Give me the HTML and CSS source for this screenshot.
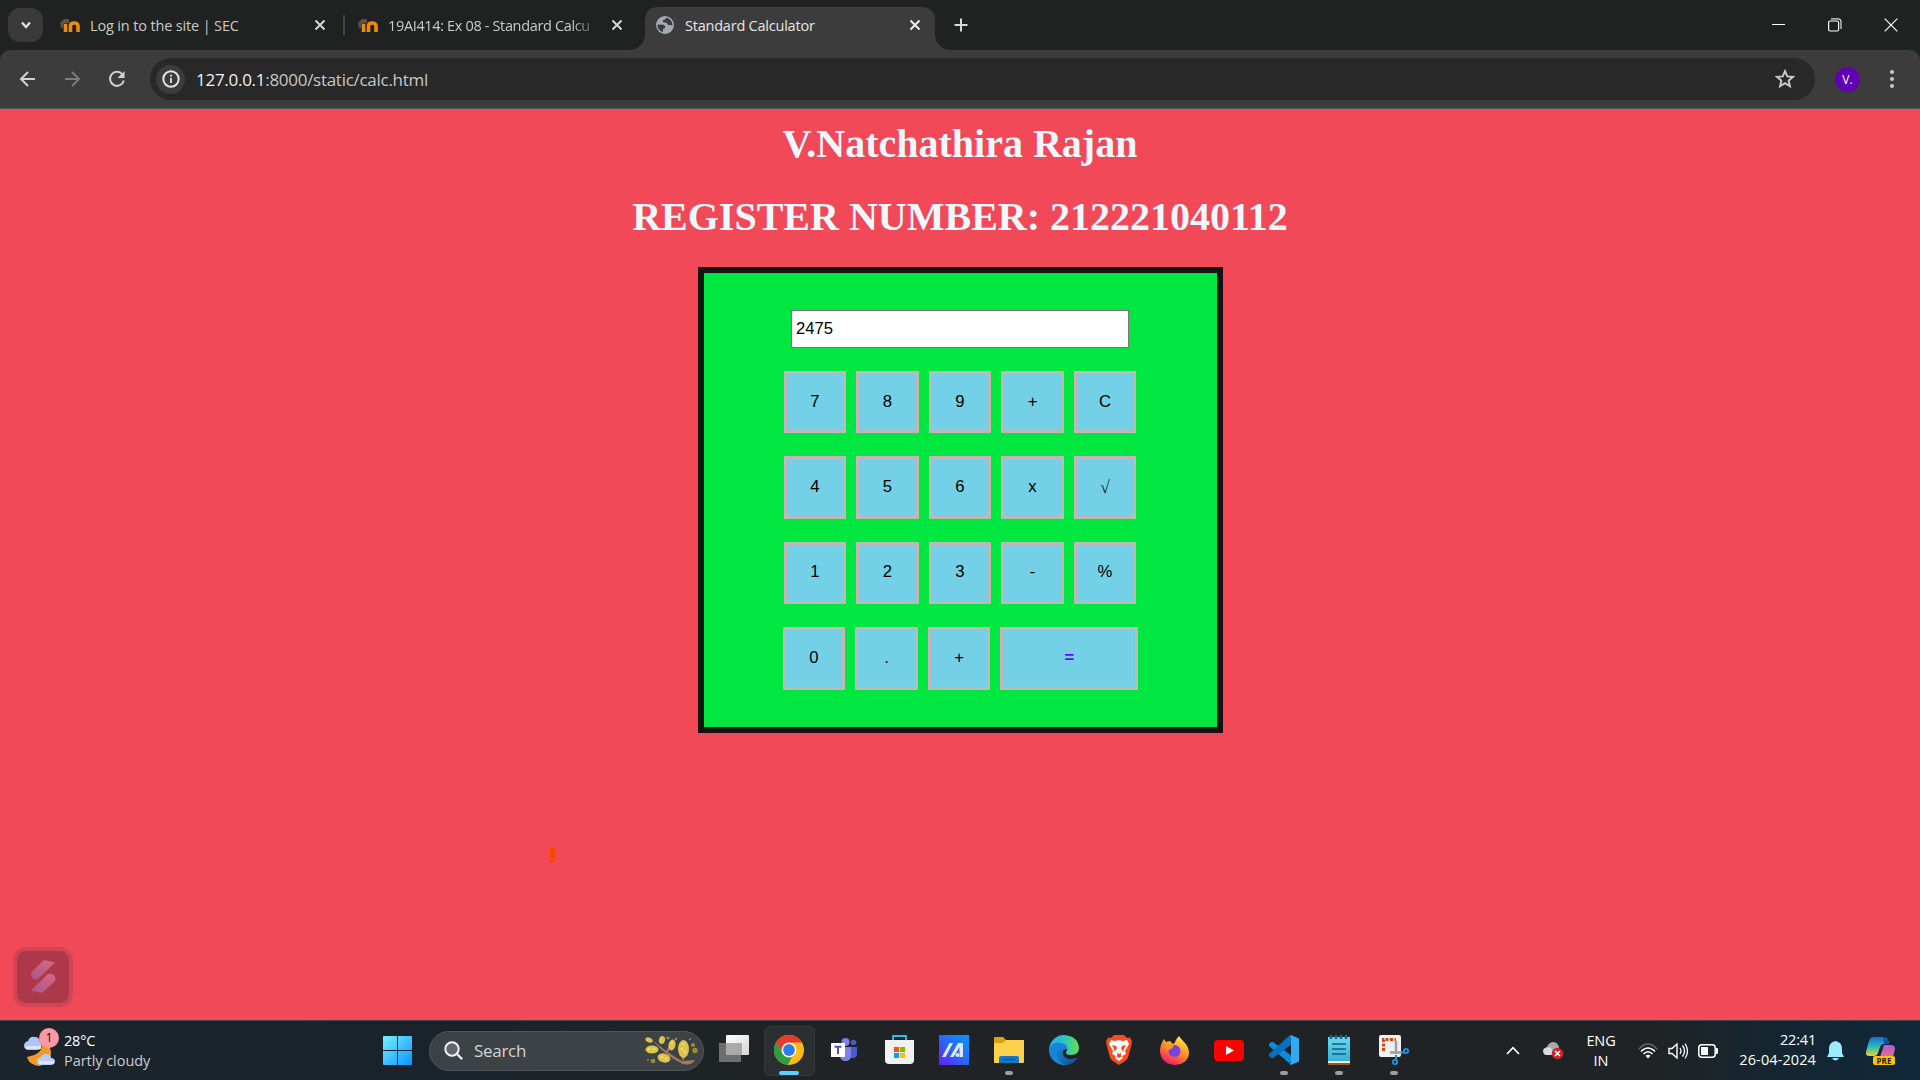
FILE: index.html
```html
<!DOCTYPE html>
<html lang="en">
<head>
<meta charset="utf-8">
<title>Standard Calculator</title>
<link rel="stylesheet" href="styles.css">
</head>
<body>
<div class="screen">
  <header class="tabs">
    <button class="tab-search"><svg width="14" height="14" viewBox="0 0 14 14"><path d="M3 4.5l4 4.500 4-4.500" fill="none" stroke="#e3e3e3" stroke-width="2.200"/></svg></button>
    <div class="tab first">
      <svg class="moodle" width="20" height="15" viewBox="0 0 20 15"><path d="M0 5L4 1h5v4L3 6v4H1z" fill="#59534b"/><path d="M5.500 6v8M10.500 14V8Q10.500 5 14.200 5T18 8v6" fill="none" stroke="#ef8a10" stroke-width="3.600"/></svg>
      <span class="tab-title t1">Log in to the site | SEC</span>
      <svg class="x" width="12" height="12" viewBox="0 0 12 12"><path d="M1.500 1.500l9 9m0-9l-9 9" stroke="#d5d5d5" stroke-width="2"/></svg>
    </div>
    <div class="tab second">
      <svg class="moodle" width="20" height="15" viewBox="0 0 20 15"><path d="M0 5L4 1h5v4L3 6v4H1z" fill="#59534b"/><path d="M5.500 6v8M10.500 14V8Q10.500 5 14.200 5T18 8v6" fill="none" stroke="#ef8a10" stroke-width="3.600"/></svg>
      <span class="tab-title t2">19AI414: Ex 08 - Standard Calcu</span>
      <svg class="x" width="12" height="12" viewBox="0 0 12 12"><path d="M1.500 1.500l9 9m0-9l-9 9" stroke="#d5d5d5" stroke-width="2"/></svg>
    </div>
    <div class="tab active">
      <svg class="globe" width="18" height="18" viewBox="0 0 18 18"><circle cx="9" cy="9" r="9" fill="#a3a8b2"/><path d="M10.500 1.800L9 3.500 7 4v2l4 1 1 2h3l1.500 1A7.500 7.500 0 0 0 10.500 1.800M1.500 8.500l6 .3 2 1.700-1 2-1.500.5v3.200A7.500 7.500 0 0 1 1.500 8.500" fill="#3c3c3c"/></svg>
      <span class="tab-title t3">Standard Calculator</span>
      <svg class="x" width="12" height="12" viewBox="0 0 12 12"><path d="M1.500 1.500l9 9m0-9l-9 9" stroke="#eee" stroke-width="2"/></svg>
    </div>
    <svg class="plus" width="14" height="14" viewBox="0 0 14 14"><path d="M7 .5v13M.5 7h13" stroke="#d8d8d8" stroke-width="2"/></svg>
    <div class="window-buttons">
      <svg width="14" height="14" viewBox="0 0 14 14"><path d="M0 6.500h13" stroke="#fff"/></svg>
      <svg width="14" height="14" viewBox="0 0 14 14"><rect x=".6" y="3" width="10" height="10" rx="1.500" fill="none" stroke="#fff" stroke-width="1.200"/><path d="M3 .8h7q3 0 3 3V11" fill="none" stroke="#ddd" stroke-width="1.200"/></svg>
      <svg width="14" height="14" viewBox="0 0 14 14"><path d="M.7.700l12.600 12.600m0-12.600L.7 13.300" stroke="#fff" stroke-width="1.200"/></svg>
    </div>
  </header>
  <nav class="toolbar-back"><div class="toolbar">
    <svg class="tb-icon" width="18" height="18" viewBox="0 0 18 18"><path d="M17 9H3M10 2L3 9l7 7" fill="none" stroke="#d0d0d0" stroke-width="2"/></svg>
    <svg class="tb-icon" width="18" height="18" viewBox="0 0 18 18"><path d="M2 9h14M9 2l7 7-7 7" fill="none" stroke="#7c7c7c" stroke-width="2"/></svg>
    <svg class="tb-icon" width="18" height="18" viewBox="0 0 18 18"><path d="M14.500 4.500A7 7 0 1 0 15.800 10.500" fill="none" stroke="#d0d0d0" stroke-width="2"/><path d="M16.500 1v7H9.500l3-3 2-2z" fill="#d0d0d0"/></svg>
    <div class="address">
      <span class="info"><svg width="18" height="18" viewBox="0 0 18 18"><circle cx="9" cy="9" r="7.700" fill="none" stroke="#e3e3e3" stroke-width="2"/><path d="M9 8v5M9 4.700v2" stroke="#e3e3e3" stroke-width="1.800"/></svg></span>
      <span class="url">127.0.0.1<i>:8000/static/calc.html</i></span>
      <svg class="star" width="20" height="20" viewBox="0 0 20 20"><path d="M10 2.200l2.300 5.200 5.600.5-4.200 3.700 1.200 5.500-4.900-2.900-4.900 2.900 1.200-5.500L2.100 7.900l5.600-.5z" fill="none" stroke="#c7c7c7" stroke-width="2"/></svg>
    </div>
    <span class="avatar">V.</span>
    <svg class="menu" width="6" height="20" viewBox="0 0 6 20"><g fill="#c7c7c7"><circle cx="3" cy="3" r="2"/><circle cx="3" cy="10" r="2"/><circle cx="3" cy="17" r="2"/></g></svg>
  </div></nav>

  <main class="page">
    <h1>V.Natchathira Rajan</h1>
    <h1>REGISTER NUMBER: 212221040112</h1>
    <section class="calculator">
      <input class="display" type="text" value="2475">
      <div class="keys"><button>7</button><button>8</button><button>9</button><button>+</button><button>C</button></div>
      <div class="keys"><button>4</button><button>5</button><button>6</button><button>x</button><button class="root">√</button></div>
      <div class="keys"><button>1</button><button>2</button><button>3</button><button>-</button><button>%</button></div>
      <div class="keys last"><button>0</button><button>.</button><button>+</button><button class="equals">=</button></div>
    </section>
    <span class="mark"></span>
    <div class="widget"><svg width="52" height="52" viewBox="0 0 52 52"><defs><linearGradient id="wg" x1="0" y1="1" x2=".6" y2="0"><stop stop-color="#a9578f"/><stop offset="1" stop-color="#cf6680"/></linearGradient></defs><path d="M27 9l11 2.500L22 27q-3 3-6.500 0-3-3.500 0-7z" fill="url(#wg)"/><path d="M25 42L14 39.500 30 24q3-3 7 0 3 4 0 7z" fill="url(#wg)"/></svg></div>
  </main>

  <footer class="taskbar">
    <div class="weather">
      <div class="weather-icon"><svg width="32" height="34" viewBox="0 0 32 34"><path d="M18 8Q20 20 3 23q2 8 12 9 12-2 12-14Q26 9 18 8" fill="#f29a27"/><path d="M4 16q-4-1-4-4 0-4 4-5 2-5 7-4 4 0 5 5 3 3 1 6-1 2-4 2z" fill="#adc7f4"/><path d="M16 31q-3-1-3-4t4-4q2-4 7-3 3 1 3 4 4 0 4 4-1 3-4 3z" fill="#b7cdf7"/><path d="M2 13.500h15M15 28.500h15" stroke="#dbe6fb" stroke-width="3"/></svg><b class="badge">1</b></div>
      <div class="weather-text"><span class="deg">28°C</span><span class="cond">Partly cloudy</span></div>
    </div>
    <svg class="start" width="29" height="29" viewBox="0 0 29 29"><defs><linearGradient id="win" x1="0" y1="0" x2="1" y2="1" ><stop stop-color="#79efff"/><stop offset="1" stop-color="#0894ff"/></linearGradient></defs><path d="M1 0h13v14H0V1q0-1 1-1M15 0h13q1 0 1 1v13H15M0 15h14v14H1q-1 0-1-1M15 15h14v13q0 1-1 1H15" fill="url(#win)"/></svg>
    <div class="search">
      <svg width="19" height="19" viewBox="0 0 19 19"><circle cx="8" cy="8" r="6.700" fill="#62676b" stroke="#f1f1f1" stroke-width="2"/><path d="M13 13l4.500 4.500" stroke="#f1f1f1" stroke-width="2.400" stroke-linecap="round"/></svg>
      <span class="search-label">Search</span>
      <svg class="branch" width="53" height="31" viewBox="0 0 53 31"><path d="M7 5l13 10q11 8 17 11l13-1q-4 6-12 4Q27 24 17 15z" fill="#a9795b"/><path d="M22 17l3-6M38 25v-5" stroke="#a9795b" stroke-width="2"/><g fill="#dcc34c"><ellipse cx="4" cy="5" rx="3.800" ry="2.500" transform="rotate(20 4 5)"/><ellipse cx="17" cy="5" rx="3" ry="4" transform="rotate(15 17 5)"/><ellipse cx="7" cy="14.500" rx="6.500" ry="4"/><ellipse cx="27" cy="10" rx="3.500" ry="5.500" transform="rotate(12 27 10)"/><ellipse cx="38.500" cy="14" rx="5.500" ry="9"/><ellipse cx="19" cy="23" rx="6.500" ry="4.500" transform="rotate(15 19 23)"/></g><g fill="#eadb7b"><circle cx="4" cy="14" r="1.300"/><circle cx="9" cy="14" r="1.300"/><circle cx="38" cy="9" r="1.300"/><circle cx="37" cy="14" r="1.300"/><circle cx="40" cy="17" r="1.300"/><circle cx="17" cy="22" r="1.300"/><circle cx="21" cy="24" r="1.300"/><circle cx="27" cy="8" r="1.200"/></g><g fill="#9b8b32"><circle cx="48" cy="10" r="2"/><circle cx="50" cy="15.500" r="2.700"/><circle cx="23" cy="3" r="1.600"/><circle cx="31" cy="4" r="1.300"/><circle cx="8" cy="26" r="2.300"/><circle cx="3" cy="25" r="1"/><circle cx="45" cy="4" r="1"/></g></svg>
    </div>
    <div class="apps">
      <div class="app"><svg width="30" height="30" viewBox="0 0 30 30"><defs><linearGradient id="tv" x2="1" y2="1"><stop stop-color="#fff"/><stop offset="1" stop-color="#d6d6d6"/></linearGradient></defs><path d="M0 8h22v19H0z" fill="#6c6e70"/><rect x="7" y="0" width="23" height="20" rx="1" fill="url(#tv)"/><path d="M7 8h16v12H7z" fill="#aaa"/></svg></div>
      <div class="app current"><svg width="30" height="30" viewBox="0 0 30 30"><circle cx="15" cy="15" r="15" fill="#fbbc18"/><path d="M2 7.500A15 15 0 0 1 28 7.500H15A7.500 7.500 0 0 0 8.500 18.700z" fill="#e43b2e"/><path d="M2 7.500L8.500 18.700A7.500 7.500 0 0 0 18 22l-4.200 8A15 15 0 0 1 2 7.500" fill="#2b9d45"/><circle cx="15" cy="15" r="7.300" fill="#fff"/><circle cx="15" cy="15" r="5.900" fill="#2f7de9"/></svg><i class="run"></i></div>
      <div class="app"><svg width="26" height="24" viewBox="0 0 26 24"><circle cx="14.500" cy="4" r="4" fill="#7b83eb"/><circle cx="22.500" cy="4.500" r="2.700" fill="#5059c9"/><path d="M19 9h7v7q0 4-4 4h-3z" fill="#5059c9"/><path d="M9 9h11v8q0 6-5.500 6Q9 23 9 17z" fill="#7b83eb"/><path d="M0 5h14v14H0z" fill="#fff"/><path d="M3.500 8.800h7M7 8.800V16" stroke="#4b53bc" stroke-width="2"/></svg></div>
      <div class="app"><svg width="29" height="30" viewBox="0 0 29 30"><path d="M8 7V1h13v6" fill="none" stroke="#31bdf2" stroke-width="1.800"/><path d="M0 5h29v20q0 4-4 4H4q-4 0-4-4z" fill="#f1f1f1"/><path d="M9 12h5v5H9z" fill="#f15221"/><path d="M15 12h5v5h-5z" fill="#7fba00"/><path d="M9 18h5v5H9z" fill="#00a3ee"/><path d="M15 18h5v5h-5z" fill="#ffb900"/></svg></div>
      <div class="app"><svg width="30" height="30" viewBox="0 0 30 30"><defs><linearGradient id="asus" x1="0" y1="1" x2="1" y2="0"><stop stop-color="#671cff"/><stop offset=".5" stop-color="#2868f6"/><stop offset="1" stop-color="#0798ff"/></linearGradient></defs><path d="M0 0h30v30H0z" fill="url(#asus)"/><path d="M3 22l7.500-14H14L6.500 22zM11 22l8-14h5v14h-3.500V12L14.500 22z" fill="#dbe9ff"/><circle cx="18.500" cy="20" r="2" fill="#dbe9ff"/></svg></div>
      <div class="app"><svg width="30" height="27" viewBox="0 0 30 27"><path d="M0 1q0-1 1-1h8l3 3h17l1 1v8H0z" fill="#dba113"/><path d="M0 6h9l3-3h18v22q0 1-1 1H1q-1 0-1-1z" fill="#ffd04b"/><path d="M5 26v-5q0-2 2-2h16q2 0 2 2v5z" fill="#1579c9"/><path d="M9 22.500h12" stroke="#0958a4" stroke-width="1.500"/></svg><i class="run"></i></div>
      <div class="app"><svg width="30" height="30" viewBox="0 0 30 30"><defs><linearGradient id="edge1" x2="1"><stop stop-color="#29a7ed"/><stop offset=".5" stop-color="#29c3c7"/><stop offset="1" stop-color="#66df48"/></linearGradient><linearGradient id="edge2" x2="1" y2="1"><stop stop-color="#1785dc"/><stop offset="1" stop-color="#134b92"/></linearGradient></defs><path d="M0 15A15 15 0 0 1 15 0q14 1 15 13 0 7-8 7-6 0-5-3 3-4-1-7Q8 6 0 15" fill="url(#edge1)"/><path d="M0 14Q4 6 12 8q7 1 6 6-6 1-4 6 4 7 14 3Q24 30 15 30A15 15 0 0 1 0 14" fill="#1585d8"/><path d="M14 12q-6 2-6 8 1 7 8 10 9-1 12-7-10 4-14-3-2-5 2-7-1-2-2-1" fill="url(#edge2)"/></svg></div>
      <div class="app"><svg width="26" height="30" viewBox="0 0 26 30"><path d="M8 0h10l3 3 3-.5 2 4-1 5-3 11q-1 2-3 3.500L13 30l-6-4q-2-1.500-3-3.500L1 11.500 0 6.500l2-4L5 3z" fill="#fb4b1d"/><path d="M13 5l4 1 4-1 2 4-4 7 1 3-4 2 1 2-4 3-4-3 1-2-4-2 1-3-4-7 2-4 4 1z" fill="#fff"/><path d="M6 10l4 1 1 2-2 4-1-3zM20 10l-4 1-1 2 2 4 1-3zM11 18l2 1 2-1v4l-2 1-2-1z" fill="#fb4b1d"/></svg></div>
      <div class="app"><svg width="29" height="29" viewBox="0 0 29 29"><defs><linearGradient id="fox" x1=".8" y1="0" x2=".3" y2="1"><stop stop-color="#fff34a"/><stop offset=".45" stop-color="#ff9a28"/><stop offset="1" stop-color="#f31664"/></linearGradient></defs><path d="M19 0q2 3 5 6 5 5 5 11-1 11-14 12Q1 28 0 15 0 9 4 3l2 3 4-1 3 3q2-1 3-4 1-2 3-4" fill="url(#fox)"/><circle cx="14.500" cy="15" r="6" fill="#7b42dc"/><path d="M7 9q3 2 7 0-1 4-6 5-3 0-3-3z" fill="#ff9626"/></svg></div>
      <div class="app"><svg width="30" height="21" viewBox="0 0 30 21"><rect width="30" height="21" rx="4" fill="#f00"/><path d="M12 6l8 4.500-8 4.500z" fill="#fff"/></svg></div>
      <div class="app"><svg width="30" height="30" viewBox="0 0 30 30"><path d="M2 7L0 9v2l20 17 3-1v-6L4 7z" fill="#0a8bdd"/><path d="M2 23L0 21v-2L20 1l3 1v7L4 23z" fill="#0871bd"/><path d="M22 0l8 3.500v23L22 30l-2-2q2 1 2-1V3q0-2-2-1z" fill="#31a9f3"/></svg><i class="run"></i></div>
      <div class="app"><svg width="22" height="30" viewBox="0 0 22 30"><defs><linearGradient id="note" x2="0" y2="1"><stop stop-color="#6ed9ed"/><stop offset="1" stop-color="#38afd2"/></linearGradient></defs><path d="M0 2h22v24H0z" fill="url(#note)"/><path d="M0 26h22v2H0z" fill="#eee"/><path d="M0 28h22v2H0z" fill="#a2531b"/><path d="M3 0v4m5-4v4m5-4v4m5-4v4" stroke="#126b8e" stroke-width="2.500"/><path d="M4 9h14M4 14h14M4 19h14" stroke="#07618b" stroke-width="1.700"/></svg><i class="run"></i></div>
      <div class="app"><svg width="30" height="30" viewBox="0 0 30 30"><rect width="22" height="22" rx="2" fill="#f0f0f0"/><path d="M4.500 16V4.500H17" fill="none" stroke="#d94615" stroke-width="3" stroke-dasharray="3 1.500"/><path d="M17 6v13m-6-1.500h12" stroke="#9a9fa3" stroke-width="2.500"/><circle cx="27" cy="16" r="2.200" fill="none" stroke="#1795e6" stroke-width="1.800"/><circle cx="16" cy="27" r="2.200" fill="none" stroke="#1795e6" stroke-width="1.800"/><path d="M22 18l3-1m-8 3v5" stroke="#1795e6" stroke-width="2"/></svg><i class="run"></i></div>
    </div>
    <div class="tray">
      <svg class="up" width="14" height="9" viewBox="0 0 14 9"><path d="M1 8l6-6.300L13 8" fill="none" stroke="#fff" stroke-width="1.700"/></svg>
      <svg class="drive" width="21" height="18" viewBox="0 0 21 18"><path d="M3 13q-3-1-3-4 0-3 4-4 2-5 7-5 4 1 5 5v8z" fill="#a9a9a9"/><path d="M1 7q4-3 7-1l4 7H3q-4-2-2-6" fill="#dadada"/><circle cx="14.500" cy="11.500" r="5.800" fill="#cf202f"/><path d="M12 9l5 5m0-5l-5 5" stroke="#fff" stroke-width="1.500"/></svg>
      <div class="lang"><span>ENG</span><span>IN</span></div>
      <svg class="wifi" width="20" height="16" viewBox="0 0 20 16"><path d="M.7 6.200Q10-4 19.300 6.200" fill="none" stroke="#666" stroke-width="1.500"/><path d="M3 8.500q7-7 14 0M5.500 11q4.500-4.500 9 0" fill="none" stroke="#fff" stroke-width="1.500"/><path d="M7.500 12.800q2.500-2 5 0L10 15.500z" fill="#fff"/></svg>
      <svg class="sound" width="21" height="18" viewBox="0 0 21 18"><path d="M1 6.500h3l5-4.500v14l-5-4.500H1z" fill="none" stroke="#fff" stroke-width="1.400"/><path d="M12 6q2 3 0 6M14.500 3.500q4 5.500 0 11M17 1.500q5 7.500 0 15" fill="none" stroke="#fff" stroke-width="1.300"/></svg>
      <svg class="battery" width="20" height="14" viewBox="0 0 20 14"><rect x=".8" y=".8" width="16.400" height="12.400" rx="3" fill="none" stroke="#fff" stroke-width="1.500"/><path d="M3 3h7v8H3zM18 4h1q1 0 1 1v4q0 1-1 1h-1z" fill="#fff"/></svg>
      <div class="clock"><span class="time">22:41</span><span class="date">26-04-2024</span></div>
      <svg class="bell" width="17" height="20" viewBox="0 0 17 20"><path d="M8.500 0Q15 1 15 8v4l2 4H0l2-4V8q0-7 6.500-8M5 17h7q-3.500 5-7 0" fill="#99ebff"/></svg>
      <div class="copilot"><svg width="29" height="28" viewBox="0 0 29 28"><defs><linearGradient id="cp1" x2="0" y2="1"><stop stop-color="#166ed0"/><stop offset=".5" stop-color="#2bb7bd"/><stop offset="1" stop-color="#e7d52c"/></linearGradient><linearGradient id="cp2" x2="0" y2="1"><stop stop-color="#a65ee6"/><stop offset="1" stop-color="#f06b80"/></linearGradient></defs><path d="M8 0h10q3 0 4 3l1 4h-5q-3 0-4 3l-2 6q-1 3-4 3H3q-4 0-3-4L3 4q1-4 5-4" fill="url(#cp1)"/><path d="M17 0h2q3 1 4 7h-5z" fill="#174bb5"/><path d="M18 8h7q4 0 4 4l-2 8H14z" fill="url(#cp2)"/></svg><b class="pre">PRE</b></div>
    </div>
  </footer>
</div>
</body>
</html>
```
FILE: styles.css
```css
* { box-sizing: border-box; }
body { margin: 0; background: #f14957; overflow: hidden; font-family: "Open Sans", "Noto Sans", sans-serif; }
svg { display: block; flex: none; }
i { font-style: normal; }
.screen { width: 1920px; height: 1080px; display: flex; flex-direction: column; }

/* browser tabs */
.tabs { height: 50px; flex: none; display: flex; background: #1f2221; padding-left: 8px; }
.tab-search { width: 35px; height: 34px; margin: 8px 17px 0 0; padding: 0; border: 0; border-radius: 12px; background: #3a3a3a; display: flex; align-items: center; justify-content: center; }
.tab { display: flex; align-items: center; height: 50px; color: #c9cbca; font-size: 14.5px; }
.tab-title { display: block; white-space: nowrap; margin-left: 10px; padding-top: 1px; letter-spacing: -.35px; line-height: 24px; }
.first { width: 285px; position: relative; }
.first::after { content: ""; width: 2px; height: 20px; background: #454746; margin-left: auto; }
.t1 { width: 224px; letter-spacing: -.15px; }
.second { width: 287px; margin-left: 13px; }
.t2 { width: 208px; margin-right: 15px; -webkit-mask-image: linear-gradient(90deg, #000 88%, transparent 103%); mask-image: linear-gradient(90deg, #000 88%, transparent 103%); }
.active { position: relative; width: 290px; height: 43px; margin-top: 7px; padding: 0 14px 7px 11px; background: #3c3c3c; border-radius: 12px 12px 0 0; color: #e6e6e6; }
.active::before, .active::after { content: ""; position: absolute; bottom: 0; width: 15px; height: 15px; }
.active::before { left: -15px; background: radial-gradient(circle at 0 0, transparent 14.5px, #3c3c3c 15px); }
.active::after { right: -15px; background: radial-gradient(circle at 100% 0, transparent 14.5px, #3c3c3c 15px); }
.active .tab-title { flex: 1; margin-left: 11px; letter-spacing: -.22px; }
.plus { margin: 18px 0 0 19px; }
.window-buttons { margin: 18px 22px 0 auto; display: flex; gap: 42px; }

/* toolbar */
.toolbar-back { height: 59px; flex: none; background: #1f2221; }
.toolbar { height: 59px; background: #3c3c3c; border-radius: 10px 10px 0 0; border-bottom: 1px solid #505050; display: flex; align-items: center; padding-left: 18px; }
.tb-icon { margin-right: 27px; }
.address { width: 1665px; height: 42px; margin-left: -3px; border-radius: 21px; background: #282828; display: flex; align-items: center; padding: 0 20px 0 6px; }
.info { width: 29px; height: 29px; border-radius: 50%; background: #3c3c3c; display: flex; align-items: center; justify-content: center; }
.url { margin-left: 11px; padding-top: 2px; font-size: 17px; line-height: 24px; letter-spacing: -.28px; color: #f1f1f1; }
.url i { color: #c7c7c7; }
.star { margin-left: auto; }
.avatar { width: 25px; height: 25px; margin-left: 20px; border-radius: 50%; background: #6200b3; color: #fff; font-size: 12px; line-height: 25px; text-align: center; }
.menu { margin-left: 29px; }

/* web page */
.page { position: relative; flex: 1; min-height: 0; background: #f14957; display: flex; flex-direction: column; align-items: center; padding-top: 12px; }
h1 { margin: 0 0 27px; font: bold 40px/46px "Liberation Serif", "Times New Roman", serif; color: #f0f8ff; white-space: nowrap; }
.calculator { width: 525px; height: 466px; margin: 0 0 0 1px; border: 6px solid #141414; background: #00e741; display: flex; flex-direction: column; align-items: center; padding-top: 37px; gap: 23px; }
.display { width: 338px; height: 38px; flex: none; border: 1px solid #767676; border-radius: 0; background: #fff; margin: 0 1px 0 0; padding: 0 4px; font: 16.67px "Liberation Sans", Arial, sans-serif; color: #000; outline: 0; }
.keys { display: flex; gap: 10px; flex: none; margin-right: 1px; }
.keys.last { margin-right: 0; }
.keys button { width: 62.5px; height: 62.4px; margin: 0; padding: 0 0 1px; border: 3px solid #c0b8b8; border-radius: 0; background: #73d0e7; color: #000; font: 16.67px "Liberation Sans", Arial, sans-serif; }
.keys .equals { width: 138px; color: #7000ff; font-weight: bold; }
.keys .root { font-family: "Liberation Serif", serif; font-size: 18px; color: #12303a; }
.mark { position: absolute; left: 550px; top: 739px; width: 5px; height: 14px; background: #f24a00; }
.widget { position: absolute; left: 13px; top: 838px; width: 60px; height: 60px; border: 4px solid #d14554; border-radius: 13px; background: #ac384a; }

/* taskbar */
.taskbar { height: 60px; flex: none; display: flex; align-items: center; background: linear-gradient(90deg, #1b242b 0, #1b232a 26%, #202325 42%, #202325 86%, #142632 93%, #10283a 100%); border-top: 1px solid #41484a; color: #fff; }
.weather { width: 383px; padding-left: 24px; display: flex; align-items: center; }
.weather-icon { position: relative; width: 32px; height: 34px; }
.badge { position: absolute; left: 15px; top: -6px; width: 20px; height: 20px; border-radius: 50%; background: #ff98a4; color: #111; font-size: 12.5px; font-weight: normal; line-height: 20px; text-align: center; }
.weather-text { margin-left: 8px; display: flex; flex-direction: column; font-size: 14.5px; line-height: 20px; letter-spacing: -.05px; }
.deg { letter-spacing: -.2px; }
.cond { color: #c9ccce; }
.search { width: 275px; height: 40px; margin-left: 17px; border: 1px solid #515659; border-radius: 20px; background: #3d4246; display: flex; align-items: center; padding: 0 5px 0 14px; }
.search-label { margin-left: 11px; font-size: 17px; letter-spacing: -.3px; line-height: 24px; color: #d2d4d5; }
.branch { margin-left: auto; }
.apps { display: flex; margin-left: 2.5px; height: 50px; }
.app { position: relative; width: 55px; height: 50px; display: flex; align-items: center; justify-content: center; }
.app > svg { margin-top: -1px; }
.current { width: 51px; margin: 0 2px; background: #2b2f31; border: 1px solid #36393b; border-radius: 6px; }
.run { position: absolute; bottom: 1px; left: 50%; width: 8px; height: 4px; margin-left: -4px; border-radius: 2px; background: #9c9d9e; }
.current .run { width: 20px; margin-left: -10px; bottom: 0; background: #60cdff; }
.tray { margin-left: auto; padding-right: 25px; display: flex; align-items: center; font-size: 14.5px; line-height: 20px; }
.up { margin-right: 23px; }
.lang { width: 36px; margin-left: 19px; display: flex; flex-direction: column; align-items: center; letter-spacing: -.1px; }
.wifi { margin-left: 19px; }
.sound { margin-left: 10px; }
.battery { margin-left: 9px; }
.clock { width: 98px; margin-top: -2px; display: flex; flex-direction: column; align-items: flex-end; letter-spacing: .1px; }
.time { letter-spacing: -.2px; }
.bell { margin-left: 11px; }
.copilot { position: relative; margin-left: 22px; }
.pre { position: absolute; left: 7px; bottom: 0; width: 22px; height: 9px; border-radius: 2px; background: #fdc20b; color: #222; font-size: 8px; line-height: 9px; text-align: center; }
```
